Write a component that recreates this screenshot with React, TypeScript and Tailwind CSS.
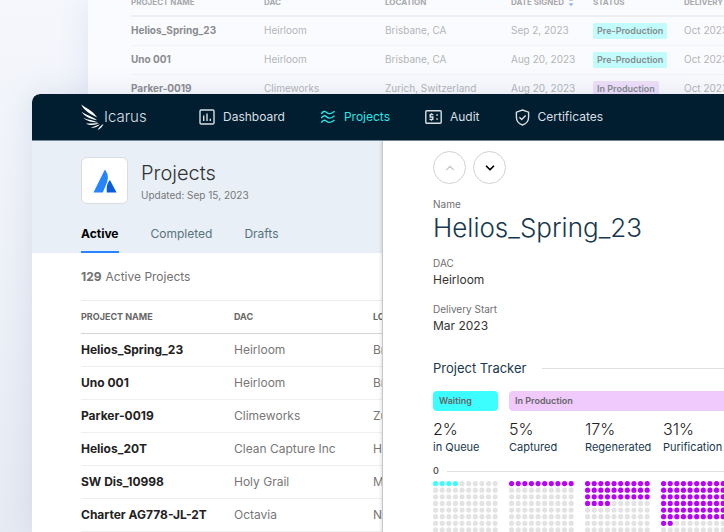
import { ReactNode } from "react";
import { ChevronDown, ChevronUp } from "lucide-react";

const signedProjects = [
  { name: "Helios_Spring_23", dac: "Heirloom", location: "Brisbane, CA", signed: "Sep 2, 2023", status: "Pre-Production", delivery: "Oct 2023" },
  { name: "Uno 001", dac: "Heirloom", location: "Brisbane, CA", signed: "Aug 20, 2023", status: "Pre-Production", delivery: "Oct 2023" },
  { name: "Parker-0019", dac: "Climeworks", location: "Zurich, Switzerland", signed: "Aug 20, 2023", status: "In Production", delivery: "Oct 2023" },
];

const activeProjects = [
  { name: "Helios_Spring_23", dac: "Heirloom", location: "Br" },
  { name: "Uno 001", dac: "Heirloom", location: "Br" },
  { name: "Parker-0019", dac: "Climeworks", location: "Zu" },
  { name: "Helios_20T", dac: "Clean Capture Inc", location: "He" },
  { name: "SW Dis_10998", dac: "Holy Grail", location: "M" },
  { name: "Charter AG778-JL-2T", dac: "Octavia", location: "Na" },
];

const stages = [
  { percent: "2%", label: "in Queue", filled: 4, color: "#3cfdff" },
  { percent: "5%", label: "Captured", filled: 10, color: "#b900ff" },
  { percent: "17%", label: "Regenerated", filled: 34, color: "#b900ff" },
  { percent: "31%", label: "Purification", filled: 62, color: "#b900ff" },
];

const WingLogo = () => (
  <svg width="23" height="27" viewBox="0 0 23 27" fill="#fff" aria-hidden="true">
    <path d="M.2.500C6 4.500 12.500 7.500 16.200 13.500 10 10.500 3 6.500.2.500Z" />
    <path d="M.6 7.700C5.500 11.300 11 12 16 16.200 9.500 15 3 12.200.6 7.700Z" />
    <path d="M2.200 13.800C7 16.200 12 15.900 17 18.400 11.500 18.600 5.500 17 2.200 13.800Z" />
    <path d="M5 19.400C9.500 19.900 13.500 18.700 18 19.600 13.700 21.300 8.500 21.500 5 19.400Z" />
    <path d="M10 23.600C13.500 22.900 15.500 21.200 19 20.600 16.700 22.900 13.500 24.300 10 23.600Z" />
    <path d="M16.500 26C18 23.700 19.700 21.800 22.500 19.800 21.700 22.800 19.300 25 16.500 26Z" />
  </svg>
);

const DashboardIcon = () => (
  <svg width="16" height="16" viewBox="0 0 16 16" fill="none" stroke="currentColor" strokeWidth="1.400" aria-hidden="true">
    <rect x="1" y="1" width="14" height="14" rx="1.200" />
    <path d="M4.700 6.500V12M8 4.500V12M11.300 9.800V12" />
  </svg>
);

const WavesIcon = () => (
  <svg width="16" height="16" viewBox="0 0 16 16" fill="none" stroke="currentColor" strokeWidth="1.400" aria-hidden="true">
    <path d="M1.300 4.800C3 2.200 4.600 1.800 6.300 3.200S10.200 6.200 14.500 2.300" />
    <path d="M1.300 9.200C3 6.600 4.600 6.200 6.300 7.600S10.200 10.600 14.500 6.700" />
    <path d="M1.300 13.600C3 11 4.600 10.600 6.300 12S10.200 15 14.500 11.100" />
  </svg>
);

const AuditIcon = () => (
  <svg width="17" height="14" viewBox="0 0 17 14" fill="none" stroke="currentColor" strokeWidth="1.400" aria-hidden="true">
    <rect x=".8" y=".8" width="15.400" height="12.400" rx="1" />
    <path d="M8.400 4.600H5.200V7H7.800V9.400H4.500M6.500 3.300V4.600M6.500 9.400V10.700" />
    <path d="M11.300 5H12.800M11.300 9H12.800" />
  </svg>
);

const ShieldIcon = () => (
  <svg width="15" height="17" viewBox="0 0 15 17" fill="none" stroke="currentColor" strokeWidth="1.400" aria-hidden="true">
    <path d="M7.500 1 13.600 3.200V8C13.600 12 11 14.900 7.500 16 4 14.900 1.400 12 1.400 8V3.200Z" />
    <path d="M4.400 8.300 6.700 10.500 10.700 6.400" />
  </svg>
);

const navItems = [
  { label: "Dashboard", icon: <DashboardIcon />, active: false },
  { label: "Projects", icon: <WavesIcon />, active: true },
  { label: "Audit", icon: <AuditIcon />, active: false },
  { label: "Certificates", icon: <ShieldIcon />, active: false },
];

const TopNav = () => (
  <header className="flex h-[47px] items-center rounded-tl-lg border-b border-[#758896] bg-[#001e2f] pl-[49px] text-[#d9dfe3]">
    <a href="#" className="flex w-[118px] shrink-0 items-center text-[15px] font-light">
      <WingLogo />
      Icarus
    </a>
    <nav className="flex items-center gap-[35px] text-xs">
      {navItems.map((item) => (
        <a
          key={item.label}
          href="#"
          className={`flex items-center gap-2 ${item.active ? "text-[#2ce5e6]" : ""}`}
        >
          {item.icon}
          {item.label}
        </a>
      ))}
    </nav>
  </header>
);

const SignedTable = () => (
  <section className="ml-[88px] h-32 overflow-hidden bg-[#fafbfe] pl-[43px] shadow-[0_0_28px_rgba(90,110,190,0.12)]">
    <table className="w-full table-fixed border-collapse text-left text-[10px] whitespace-nowrap text-[#b4b5b7]">
      <colgroup>
        <col className="w-[133px]" />
        <col className="w-[121px]" />
        <col className="w-[126px]" />
        <col className="w-[82px]" />
        <col className="w-[91px]" />
        <col />
      </colgroup>
      <thead>
        <tr className="h-4 border-b-2 border-[#eeeff1] align-top text-[8px] leading-[4px] text-[#a8a9ab]">
          <th>PROJECT NAME</th>
          <th>DAC</th>
          <th>LOCATION</th>
          <th>
            DATE SIGNED
            <svg className="-my-1 ml-1 inline" width="6" height="7" viewBox="0 0 6 7" aria-hidden="true">
              <path d="M.5 2H5.500L3 0Z" fill="#c4c6ca" />
              <path d="M.5 4.500H5.500L3 7Z" fill="#7da9f8" />
            </svg>
          </th>
          <th>STATUS</th>
          <th>DELIVERY</th>
        </tr>
      </thead>
      <tbody>
        {signedProjects.map((project) => (
          <tr key={project.name} className="h-[29px] border-b border-[#f2f3f5]">
            <td className="font-bold text-[#8b8c8e]">{project.name}</td>
            <td>{project.dac}</td>
            <td>{project.location}</td>
            <td>{project.signed}</td>
            <td>
              <span
                className={`inline-block rounded-xs px-1 text-[9px] leading-4 font-semibold text-[#858b8e] ${
                  project.status === "In Production" ? "bg-[#f0dffa]" : "bg-[#c1fbfb]"
                }`}
              >
                {project.status}
              </span>
            </td>
            <td>{project.delivery}</td>
          </tr>
        ))}
      </tbody>
    </table>
  </section>
);

const ProjectsPane = () => (
  <main className="w-[350px] shrink-0 overflow-hidden bg-white">
    <div className="bg-[#e8eff6] pl-[49px]">
      <div className="flex items-center gap-[13px] pt-4">
        <div className="flex size-[47px] items-center justify-center rounded-md border border-[#dadde0] bg-white">
          <svg width="24" height="24" viewBox="0 0 24 24" aria-hidden="true">
            <path d="M11.900.4 14.200 4.500C15.500 8 14.700 10.500 14 13.500L9.800 23.600H.5Z" fill="#2684ff" />
            <path d="M16.900 11 23.600 23.600H13.800C13.200 18.500 14 14 16.900 11Z" fill="#0a5cd8" />
          </svg>
        </div>
        <div>
          <h1 className="text-xl leading-7 font-light text-[#333]">Projects</h1>
          <p className="text-[10px] leading-4 text-[#777]">Updated: Sep 15, 2023</p>
        </div>
      </div>
      <div className="mt-4 flex h-[33px] gap-8 text-xs text-[#5a727c]" role="tablist">
        <button role="tab" aria-selected="true" className="border-b-2 border-[#2684ff] pb-1 font-bold text-black">
          Active
        </button>
        <button role="tab" aria-selected="false" className="border-b-2 border-transparent pb-1">
          Completed
        </button>
        <button role="tab" aria-selected="false" className="border-b-2 border-transparent pb-1">
          Drafts
        </button>
      </div>
    </div>
    <div className="pl-[49px]">
      <p className="flex h-[47px] items-center gap-1 text-xs text-[#717171]">
        <b>129</b> Active Projects
      </p>
      <table className="w-full table-fixed border-collapse text-left text-xs whitespace-nowrap text-[#777]">
        <colgroup>
          <col className="w-[153px]" />
          <col className="w-[139px]" />
          <col />
        </colgroup>
        <thead>
          <tr className="h-[33px] border-t border-b border-t-[#ececec] border-b-[#d5d5d5] text-[9px] text-[#666]">
            <th>PROJECT NAME</th>
            <th>DAC</th>
            <th>LO</th>
          </tr>
        </thead>
        <tbody>
          {activeProjects.map((project) => (
            <tr key={project.name} className="h-[33px] border-b border-[#efefef]">
              <td className="font-bold text-[#222]">{project.name}</td>
              <td>{project.dac}</td>
              <td>{project.location}</td>
            </tr>
          ))}
        </tbody>
      </table>
    </div>
  </main>
);

const Field = ({ label, children }: { label: string; children: ReactNode }) => (
  <div className="leading-[17px]">
    <dt className="text-[10px] text-[#707070]">{label}</dt>
    <dd className="text-xs text-[#333]">{children}</dd>
  </div>
);

const DotGrid = ({ filled, color }: { filled: number; color: string }) => (
  <svg width="66" height="66" viewBox="0 0 66.500 66.500" aria-hidden="true">
    {Array.from({ length: 100 }, (_, i) => (
      <circle
        key={i}
        cx={2.600 + (i % 10) * 6.670}
        cy={2.600 + Math.floor(i / 10) * 6.670}
        r="2.600"
        fill={i < filled ? color : "#e3e3e3"}
      />
    ))}
  </svg>
);

const ProjectDrawer = () => (
  <aside className="z-10 min-w-0 flex-1 overflow-hidden border-l border-[#c4c8cc] bg-white pt-[10px] pl-[50px] shadow-[-1px_0_3px_rgba(0,0,0,0.12)]">
    <div className="flex gap-[7px]">
      <button aria-label="Previous project" disabled className="flex size-[33px] items-center justify-center rounded-full border border-[#d2d2d2] text-[#c9c9c9]">
        <ChevronUp size={14} strokeWidth={2} />
      </button>
      <button aria-label="Next project" className="flex size-[33px] items-center justify-center rounded-full border border-[#d2d2d2] text-black">
        <ChevronDown size={14} strokeWidth={3} />
      </button>
    </div>
    <p className="mt-3 text-[10px] leading-4 text-[#707070]">Name</p>
    <h2 className="text-[26px] leading-8 font-light text-[#17384d]">Helios_Spring_23</h2>
    <dl className="mt-[11px] flex flex-col gap-[13px]">
      <Field label="DAC">Heirloom</Field>
      <Field label="Delivery Start">Mar 2023</Field>
    </dl>
    <div className="mt-6 flex items-center gap-4">
      <h3 className="text-[13px] leading-5 text-[#17384d]">Project Tracker</h3>
      <div className="h-px flex-1 bg-[#e0e0e0]" />
    </div>
    <div className="mt-[13px] flex gap-[11px] text-[9px] leading-5 font-semibold text-[#666]">
      <span className="w-[65px] rounded-sm bg-[#3cfdff] px-[6px]">Waiting</span>
      <span className="flex-1 rounded-l-sm bg-[#f0c9fd] px-[6px]">In Production</span>
    </div>
    <div className="mt-2 flex">
      {stages.map((stage) => (
        <div key={stage.label} className="w-[76px] shrink-0 last:pl-[2px]">
          <p className="text-base leading-5 font-light text-[#222]">{stage.percent}</p>
          <p className="text-[11px] leading-4 text-[#17384d]">{stage.label}</p>
        </div>
      ))}
    </div>
    <div className="mt-2 flex items-center gap-2">
      <span className="text-[9px] leading-4 font-medium text-[#444]">0</span>
      <div className="h-px flex-1 bg-[#e0e0e0]" />
    </div>
    <div className="mt-[2px] flex">
      {stages.map((stage) => (
        <div key={stage.label} className="w-[76px] shrink-0">
          <DotGrid filled={stage.filled} color={stage.color} />
        </div>
      ))}
    </div>
  </aside>
);

export default function App() {
  return (
    <div className="relative h-screen overflow-hidden bg-linear-to-b from-[#f5f7fc] to-[#e6eaf3] font-['Inter',sans-serif]">
      <SignedTable />
      <div className="absolute top-[94px] right-0 bottom-0 left-8 flex flex-col overflow-hidden rounded-tl-lg shadow-[0_0_30px_rgba(90,110,170,0.16)]">
        <TopNav />
        <div className="flex min-h-0 flex-1">
          <ProjectsPane />
          <ProjectDrawer />
        </div>
      </div>
    </div>
  );
}
